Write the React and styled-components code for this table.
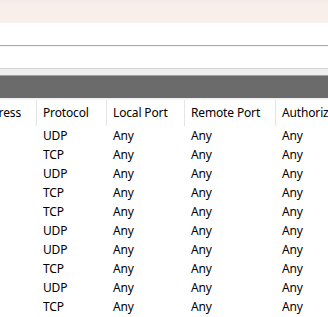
import React from "react";
import styled, { createGlobalStyle } from "styled-components";

const Global = createGlobalStyle`
  html, body { margin: 0; padding: 0; background: #ffffff; }
  body { font-family: "Segoe UI", "Noto Sans", "Open Sans", sans-serif; overflow: hidden; }
`;

const Page = styled.div`
  width: 328px;
  height: 317px;
  display: flex;
  flex-direction: column;
  overflow: hidden;
`;

const TitleBand = styled.div`
  height: 23px;
  flex: none;
  background: linear-gradient(to bottom, #f4ebe8 0px, #f8eeea 5px, #f9efeb 100%);
`;

const Bar = styled.div`
  height: ${(p) => p.$h}px;
  flex: none;
  background: ${(p) => p.$bg};
  border-top: ${(p) => (p.$top ? `1px solid ${p.$top}` : "none")};
  border-bottom: ${(p) => (p.$bottom ? `1px solid ${p.$bottom}` : "none")};
`;

const Viewport = styled.div`
  flex: 1;
  overflow: hidden;
  border-top: 1px solid #f4f4f4;
`;

const Table = styled.div`
  margin-left: -60px;
  display: grid;
  grid-template-columns: 96px 70px 78px 91px 110px;
  font-size: 12px;
  letter-spacing: -0.15px;
  color: #000;
`;

const HeadCell = styled.div`
  height: 26px;
  display: flex;
  align-items: center;
  white-space: nowrap;
  overflow: hidden;
  border-left: ${(p) => (p.$first ? "none" : "1px solid #e5e5e5")};
  padding-left: ${(p) => (p.$first ? "0px" : "6px")};
  padding-bottom: 1px;
  box-sizing: border-box;
  ${(p) => p.$first && "justify-content: flex-end; padding-right: 15px;"}
`;

const Cell = styled.div`
  height: 19px;
  display: flex;
  align-items: center;
  padding-left: 7px;
  white-space: nowrap;
  overflow: hidden;
  box-sizing: border-box;
`;

const headers = ["Remote Address", "Protocol", "Local Port", "Remote Port", "Authorized"];
const protocols = ["UDP", "TCP", "UDP", "TCP", "TCP", "UDP", "UDP", "TCP", "UDP", "TCP"];

export default function App() {
  return (
    <Page>
      <Global />
      <TitleBand />
      <Bar $h={22} $bg="#ffffff" $bottom="#aaaaaa" />
      <Bar $h={21} $bg="#ffffff" $top="#f3f3f8" $bottom="#d6d6d6" />
      <Bar $h={6} $bg="#efefef" $bottom="#a3a3a3" />
      <Bar $h={22} $bg="#6b6b6b" $bottom="#f0f0f0" />
      <Viewport>
        <Table>
          {headers.map((h, i) => (
            <HeadCell key={h} $first={i === 0}>
              {h}
            </HeadCell>
          ))}
          {protocols.map((p, r) => (
            <React.Fragment key={r}>
              <Cell>Any</Cell>
              <Cell>{p}</Cell>
              <Cell>Any</Cell>
              <Cell>Any</Cell>
              <Cell>Any</Cell>
            </React.Fragment>
          ))}
        </Table>
      </Viewport>
    </Page>
  );
}
